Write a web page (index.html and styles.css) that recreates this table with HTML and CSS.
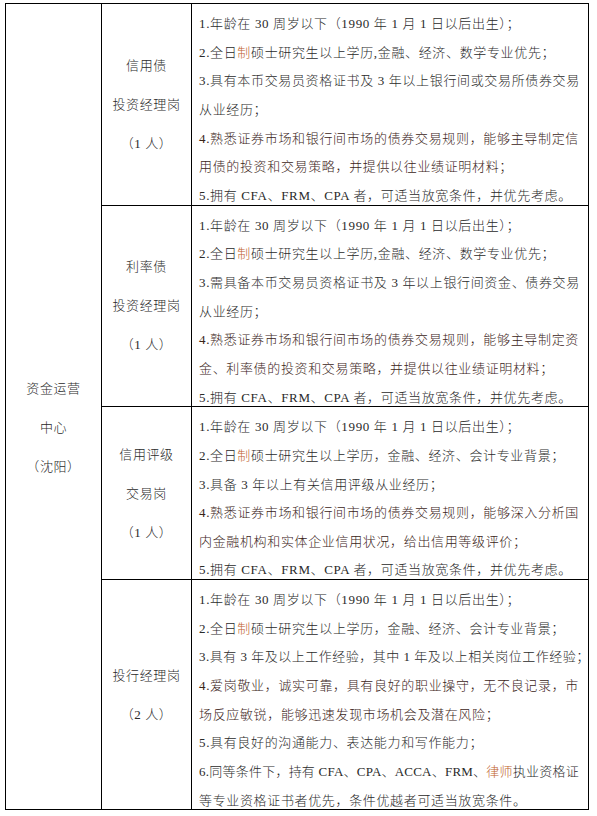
FILE: index.html
```html
<!DOCTYPE html>
<html lang="zh-CN">
<head>
<meta charset="utf-8">
<title>招聘岗位</title>
<link rel="stylesheet" href="styles.css">
</head>
<body>
<table class="jobs">
  <colgroup>
    <col class="c-dept">
    <col class="c-post">
    <col class="c-req">
  </colgroup>
  <tbody>
    <tr>
      <td class="dept" rowspan="4">
        <div class="stack">
          <span>资金运营</span>
          <span>中心</span>
          <span>（沈阳）</span>
        </div>
      </td>
      <td class="post">
        <div class="stack">
          <span>信用债</span>
          <span>投资经理岗</span>
          <span>（1 人）</span>
        </div>
      </td>
      <td class="req">
        <div class="items">
          <p><span class="last">1.年龄在 30 周岁以下（1990 年 1 月 1 日以后出生）；</span></p>
          <p><span class="last">2.全日<em class="hl">制</em>硕士研究生以上学历,金融、经济、数学专业优先；</span></p>
          <p><span class="wrap">3.具有本币交易员资格证书及 3 年以上银行间或交易所债券交易</span><span class="last">从业经历；</span></p>
          <p class="em"><span class="wrap">4.熟悉证券市场和银行间市场的债券交易规则，能够主导制定信</span><span class="last">用债的投资和交易策略，并提供以往业绩证明材料；</span></p>
          <p><span class="last">5.拥有 CFA、FRM、CPA 者，可适当放宽条件，并优先考虑。</span></p>
        </div>
      </td>
    </tr>
    <tr>
      <td class="post">
        <div class="stack">
          <span>利率债</span>
          <span>投资经理岗</span>
          <span>（1 人）</span>
        </div>
      </td>
      <td class="req">
        <div class="items">
          <p><span class="last">1.年龄在 30 周岁以下（1990 年 1 月 1 日以后出生）；</span></p>
          <p><span class="last">2.全日<em class="hl">制</em>硕士研究生以上学历,金融、经济、数学专业优先；</span></p>
          <p><span class="wrap">3.需具备本币交易员资格证书及 3 年以上银行间资金、债券交易</span><span class="last">从业经历；</span></p>
          <p class="em"><span class="wrap">4.熟悉证券市场和银行间市场的债券交易规则，能够主导制定资</span><span class="last">金、利率债的投资和交易策略，并提供以往业绩证明材料；</span></p>
          <p><span class="last">5.拥有 CFA、FRM、CPA 者，可适当放宽条件，并优先考虑。</span></p>
        </div>
      </td>
    </tr>
    <tr>
      <td class="post">
        <div class="stack">
          <span>信用评级</span>
          <span>交易岗</span>
          <span>（1 人）</span>
        </div>
      </td>
      <td class="req">
        <div class="items">
          <p><span class="last">1.年龄在 30 周岁以下（1990 年 1 月 1 日以后出生）；</span></p>
          <p><span class="last">2.全日<em class="hl">制</em>硕士研究生以上学历，金融、经济、会计专业背景；</span></p>
          <p><span class="last">3.具备 3 年以上有关信用评级从业经历；</span></p>
          <p class="em"><span class="wrap">4.熟悉证券市场和银行间市场的债券交易规则，能够深入分析国</span><span class="last">内金融机构和实体企业信用状况，给出信用等级评价；</span></p>
          <p><span class="last">5.拥有 CFA、FRM、CPA 者，可适当放宽条件，并优先考虑。</span></p>
        </div>
      </td>
    </tr>
    <tr>
      <td class="post">
        <div class="stack">
          <span>投行经理岗</span>
          <span>（2 人）</span>
        </div>
      </td>
      <td class="req">
        <div class="items">
          <p><span class="last">1.年龄在 30 周岁以下（1990 年 1 月 1 日以后出生）；</span></p>
          <p><span class="last">2.全日<em class="hl">制</em>硕士研究生以上学历，金融、经济、会计专业背景；</span></p>
          <p><span class="last tight">3.具有 3 年及以上工作经验，其中 1 年及以上相关岗位工作经验；</span></p>
          <p class="em"><span class="wrap">4.爱岗敬业，诚实可靠，具有良好的职业操守，无不良记录，市</span><span class="last">场反应敏锐，能够迅速发现市场机会及潜在风险；</span></p>
          <p><span class="last">5.具有良好的沟通能力、表达能力和写作能力；</span></p>
          <p><span class="wrap tighter">6.同等条件下，持有 CFA、CPA、ACCA、FRM、<em class="hl">律师</em>执业资格证</span><span class="last">等专业资格证书者优先，条件优越者可适当放宽条件。</span></p>
        </div>
      </td>
    </tr>
  </tbody>
</table>
</body>
</html>
```

FILE: styles.css
```css
html, body {
  margin: 0;
  padding: 0;
  background: #ffffff;
}

body {
  padding: 3px 0 0 5px;
  font-family: "Liberation Serif", "Noto Sans CJK SC", serif;
  font-size: 13px;
  font-weight: 300;
  color: #2a2a2a;
}

.jobs {
  border-collapse: collapse;
  table-layout: fixed;
  width: 583px;
}

.c-dept { width: 96px; }
.c-post { width: 90px; }
.c-req { width: 397px; }

.jobs td {
  border: 1px solid #000000;
  padding: 0;
}

.stack {
  display: flex;
  flex-direction: column;
  align-items: center;
  line-height: 39px;
  letter-spacing: 0.6px;
}

.dept {
  vertical-align: middle;
  padding-top: 41px !important;
}

.post {
  vertical-align: middle;
}

.req {
  vertical-align: top;
  padding: 6px 9px 0 7px !important;
}

.items {
  margin-bottom: -6px;
  line-height: 28.65px;
  letter-spacing: 0.65px;
}

.items p {
  margin: 0;
}

.items .wrap {
  display: block;
  white-space: nowrap;
  text-align: justify;
  text-align-last: justify;
}

.items .last {
  display: block;
  white-space: nowrap;
}

.items .tight {
  letter-spacing: 0.5px;
}

.items .tighter {
  letter-spacing: 0.2px;
}

.items .em {
  color: #3b2418;
}

.hl {
  font-style: normal;
  color: #c0622b;
}
```
